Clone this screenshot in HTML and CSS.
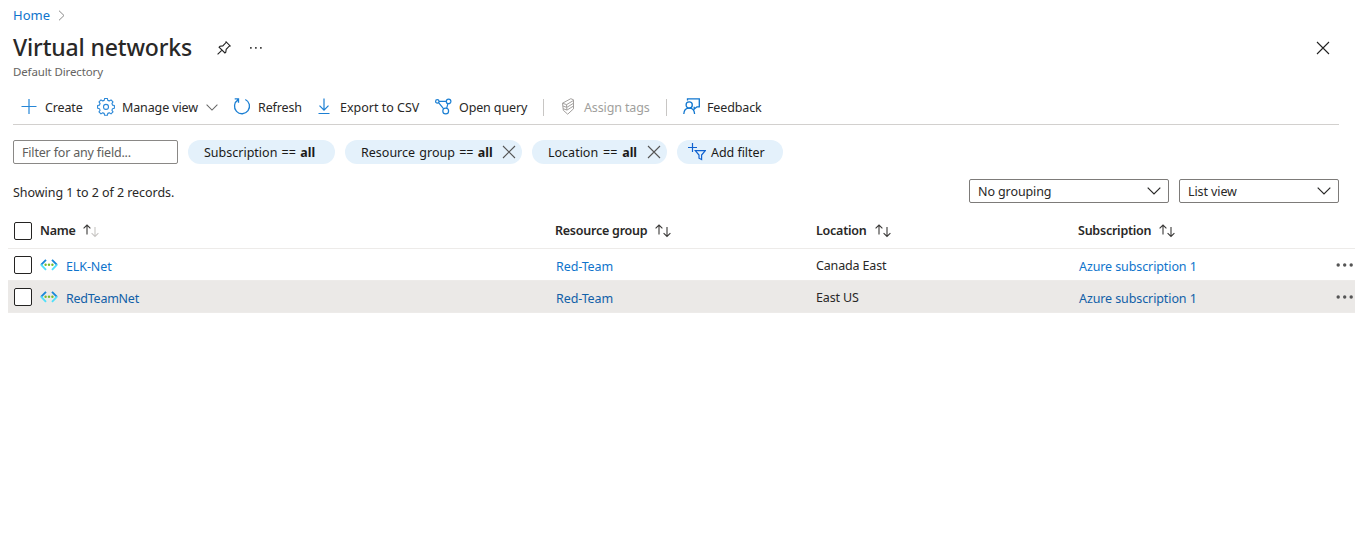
FILE: index.html
```html
<!DOCTYPE html>
<html lang="en">
<head>
<meta charset="utf-8">
<title>Virtual networks</title>
<link rel="stylesheet" href="styles.css">
</head>
<body>
<svg class="defs" width="0" height="0" aria-hidden="true">
  <defs>
    <symbol id="net" viewBox="0 0 18 12">
      <path d="M6 .8 1 5.9M12 .8 17 5.9" stroke="#1988d9" stroke-width="1.9" fill="none"/>
      <path d="M1 5.6 6 10.8M17 5.6 12 10.8" stroke="#50e0fa" stroke-width="1.9" fill="none"/>
      <g fill="#76bc2d"><circle cx="5.6" cy="5.8" r="1.2"/><circle cx="9" cy="5.8" r="1.2"/><circle cx="12.4" cy="5.8" r="1.2"/></g>
    </symbol>
    <symbol id="up" viewBox="0 0 8 12"><path d="M4 10.5V1M.6 4.4 4 1l3.4 3.4" fill="none" stroke="currentColor" stroke-width="1.1"/></symbol>
    <symbol id="down" viewBox="0 0 8 12"><path d="M4 1v9.5M.6 7.1 4 10.5l3.4-3.4" fill="none" stroke="currentColor" stroke-width="1.1"/></symbol>
    <symbol id="x" viewBox="0 0 14 14"><path d="m1 1 12 12M13 1 1 13" fill="none" stroke="currentColor" stroke-width="1.1"/></symbol>
    <symbol id="chev" viewBox="0 0 14 8"><path d="m.7.7 6.3 6.3L13.3.7" fill="none" stroke="currentColor" stroke-width="1.2"/></symbol>
    <symbol id="dots" viewBox="0 0 18 4"><g fill="currentColor"><circle cx="2.2" cy="2" r="1.7"/><circle cx="8.7" cy="2" r="1.7"/><circle cx="15.2" cy="2" r="1.7"/></g></symbol>
  </defs>
</svg>
<main class="page">
  <nav class="crumbs"><a class="link">Home</a><svg width="7" height="11" viewBox="0 0 7 11"><path d="m1 .7 5 4.8-5 4.8" fill="none" stroke="#8a8a8a"/></svg></nav>
  <header class="heading">
    <h1>Virtual networks</h1>
    <svg width="14" height="14" viewBox="0 0 14 14"><path d="M9.1.8 13.2 4.9 12.2 5.2 9.2 8.3 8.8 11.2 7.9 12 2.1 6.2 3 5.3 5.8 4.9 8.8 1.8ZM5 9.1.6 13.4" fill="none" stroke="#222" stroke-width="1.1"/></svg>
    <svg class="more" width="12" height="2" viewBox="0 0 12 2" fill="#444"><path d="M0 0h1.7v1.7H0zM5 0h1.7v1.7H5zM10 0h1.7v1.7H10z"/></svg>
    <svg class="close" width="14" height="14"><use href="#x"/></svg>
  </header>
  <p class="subtitle">Default Directory</p>

  <div class="toolbar">
    <div class="tool"><svg width="16" height="16" viewBox="0 0 16 16"><path d="M8 0v15M.5 7.5h15" stroke="#2586d7" stroke-width="1.2"/></svg><span>Create</span></div>
    <div class="tool tight"><svg width="18" height="18" viewBox="0 0 18 18" fill="none" stroke="#2b88d8" stroke-width="1.1" stroke-linejoin="round"><path d="M7.6.8h2.8l.4 1.900q.900.200 1.500.6l1.700-1.100 2 2-1.100 1.700q.4.700.6 1.500l1.900.4v2.800l-1.900.4q-.2.900-.6 1.500l1.100 1.700-2 2-1.700-1.100q-.7.4-1.500.6l-.4 1.900H7.600l-.4-1.900q-.9-.2-1.500-.6L4 16.200l-2-2 1.100-1.700q-.4-.7-.6-1.500l-1.900-.4V7.800l1.900-.4q.2-.9.6-1.500L2 4.200l2-2 1.700 1.100q.7-.4 1.500-.6Z" transform="translate(0 -.3)"/><circle cx="9" cy="8.900" r="2.500"/></svg><span>Manage view</span><svg class="tool-chev" width="12" height="7"><use href="#chev"/></svg></div>
    <div class="tool tight"><svg width="18" height="18" viewBox="0 0 18 18" fill="none" stroke="#1b7fd3" stroke-width="1.3"><path d="M12.3 1.5A7.5 7.5 0 1 1 5 1.9M1.7.8H5.5V4.7"/></svg><span>Refresh</span></div>
    <div class="tool export"><svg width="16" height="18" viewBox="0 0 16 18" fill="none" stroke="#1b7fd3" stroke-width="1.2"><path d="M8 .5V12M3.5 7.700 8 12.200l4.500-4.500M2.500 15.500h11"/></svg><span>Export to CSV</span></div>
    <div class="tool tight"><svg width="17" height="18" viewBox="0 0 17 18" fill="none" stroke="#1b7fd3" stroke-width="1.2"><circle cx="2.3" cy="3.4" r="1.7"/><circle cx="13.6" cy="3.4" r="2.3"/><circle cx="10.7" cy="13" r="2.9"/><path d="M4 3.4h7.3M3.6 4.6l5.1 6.300M12.900 5.700l-1.200 4.400"/></svg><span>Open query</span></div>
    <i class="sep"></i>
    <div class="tool disabled"><svg width="16" height="18" viewBox="0 0 16 18" fill="none" stroke="#a3a09e" stroke-width="1"><path d="M2.500 5.200 10.800.700l2.700 1.100v9L7.700 16.200 3.300 12.300ZM2.600 5.300 6.600 6.600 13.400 2.500M6.600 6.600v2.600M2.900 8l3.900 1.400 6.600-4.100M6.800 9.400V12M3.100 10.700l3.900 1.400 6.400-4"/></svg><span>Assign tags</span></div>
    <i class="sep"></i>
    <div class="tool tight"><svg width="17" height="18" viewBox="0 0 17 18" fill="none" stroke="#0f76cf" stroke-width="1.3"><path d="M4.5 2.5V.8h11.800v8h-2.300l-2.800 2.300V8.800"/><circle cx="6.200" cy="7" r="3.100"/><path d="M.8 16c.2-3.500 2.400-5.800 5.400-5.800s5.200 2.300 5.400 5.800"/></svg><span>Feedback</span></div>
  </div>

  <div class="filters">
    <div class="search">Filter for any field...</div>
    <div class="pill pill-sub"><span>Subscription == <b>all</b></span></div>
    <div class="pill pill-rg"><span>Resource group == <b>all</b></span><svg width="14" height="14"><use href="#x"/></svg></div>
    <div class="pill pill-loc"><span>Location == <b>all</b></span><svg width="14" height="14"><use href="#x"/></svg></div>
    <div class="pill pill-add"><svg width="18" height="18" viewBox="0 0 18 18" fill="none" stroke="#0f62d0" stroke-width="1.2"><path d="M4.500 0v9M0 4.500h9M7.300 7.600h10L13.600 12v4.500l-2.600-1.300V12Z"/></svg><span>Add filter</span></div>
  </div>

  <div class="summary">
    <p>Showing 1 to 2 of 2 records.</p>
    <div class="select grouping"><span>No grouping</span><svg width="14" height="8"><use href="#chev"/></svg></div>
    <div class="select view"><span>List view</span><svg width="14" height="8"><use href="#chev"/></svg></div>
  </div>

  <section class="table">
    <div class="row head">
      <i class="check"></i>
      <div class="cell"><span>Name</span><span class="sort faded"><svg width="8" height="12"><use href="#up"/></svg><svg width="8" height="12"><use href="#down"/></svg></span></div>
      <div class="cell"><span>Resource group</span><span class="sort"><svg width="8" height="12"><use href="#up"/></svg><svg width="8" height="12"><use href="#down"/></svg></span></div>
      <div class="cell"><span>Location</span><span class="sort"><svg width="8" height="12"><use href="#up"/></svg><svg width="8" height="12"><use href="#down"/></svg></span></div>
      <div class="cell"><span>Subscription</span><span class="sort"><svg width="8" height="12"><use href="#up"/></svg><svg width="8" height="12"><use href="#down"/></svg></span></div>
    </div>
    <div class="row">
      <i class="check"></i>
      <div class="cell name"><svg width="18" height="12"><use href="#net"/></svg><a class="link">ELK-Net</a></div>
      <div class="cell linked"><a class="link">Red-Team</a></div>
      <div class="cell plain"><span>Canada East</span></div>
      <div class="cell linked"><a class="link">Azure subscription 1</a></div>
      <svg class="rowmore" width="18" height="4"><use href="#dots"/></svg>
    </div>
    <div class="row hovered">
      <i class="check"></i>
      <div class="cell name"><svg width="18" height="12"><use href="#net"/></svg><a class="link tighter">RedTeamNet</a></div>
      <div class="cell linked"><a class="link">Red-Team</a></div>
      <div class="cell plain"><span>East US</span></div>
      <div class="cell linked"><a class="link">Azure subscription 1</a></div>
      <svg class="rowmore" width="18" height="4"><use href="#dots"/></svg>
    </div>
  </section>
</main>
</body>
</html>
```
FILE: styles.css
```css
* { box-sizing: border-box; }
body { margin: 0; background: #fff; color: #292827; font: 12.5px/18px "Noto Sans", "Open Sans", sans-serif; letter-spacing: -0.1px; overflow: hidden; }
.defs { display: block; height: 0; }
.page { width: 1355px; height: 545px; }
p, h1 { margin: 0; }
svg { display: block; flex: none; }
span, a, h1 { white-space: nowrap; }
.link { color: #0f74cc; }

.crumbs { display: flex; align-items: center; height: 30px; padding-left: 13px; font-size: 13px; letter-spacing: 0; }
.crumbs .link { width: 45px; }
.heading { display: flex; align-items: center; height: 35px; padding: 0 25px 0 13px; }
h1 { width: 204px; padding-bottom: 2px; font-size: 23px; line-height: 34px; font-weight: 500; letter-spacing: -0.15px; }
.more { margin-left: 19px; }
.close { margin-left: auto; color: #222; }
.subtitle { height: 25px; padding: 0 13px; line-height: 14px; font-size: 11.5px; letter-spacing: -0.13px; color: #666462; }

.toolbar { display: grid; grid-template-columns: 76px 136px 83px 119px 108px 17px 106px 17px auto; align-items: center; height: 35px; margin: 0 16px 0 13px; padding-left: 8px; border-bottom: 1px solid #d2d0ce; }
.tool { display: flex; align-items: center; gap: 8px; letter-spacing: -0.13px; }
.tool.tight { gap: 7px; }
.tool.export { letter-spacing: 0; }
.tool span { padding-top: 1px; }
.tool-chev { color: #666; margin-left: 1px; }
.sep { width: 1px; height: 17px; background: #c8c6c4; }
.disabled { color: #a19f9d; }

.filters { display: flex; gap: 10px; height: 39px; padding: 15px 13px 0; }
.search { width: 165px; height: 24px; padding: 3px 8px 0; border: 1px solid #8a8886; border-radius: 2px; color: #605e5c; letter-spacing: -0.18px; }
.pill { display: flex; align-items: center; height: 24px; border-radius: 12px; background: #e4f1fb; color: #1b1a19; padding-left: 16px; letter-spacing: 0; word-spacing: 1px; }
.pill span { padding-top: 2px; }
.pill > svg { color: #555; }
.pill-sub { width: 147px; }
.pill-rg { width: 177px; justify-content: space-between; padding-right: 6px; }
.pill-loc { width: 135px; justify-content: space-between; padding-right: 6px; word-spacing: 1.6px; }
.pill-add { width: 106px; padding-left: 11px; gap: 5px; word-spacing: 0; letter-spacing: -0.05px; }

.summary { display: flex; align-items: center; gap: 10px; height: 24px; margin: 15px 16px 0 13px; }
.summary p { margin-right: auto; padding-top: 3px; letter-spacing: -0.05px; }
.select { display: flex; align-items: center; justify-content: space-between; height: 24px; padding: 0 7px 0 8px; border: 1px solid #7d7b79; border-radius: 2px; }
.select span { padding-top: 2px; }
.grouping { width: 200px; }
.view { width: 160px; }

.table { margin: 10px 0 0 8px; }
.row { display: grid; grid-template-columns: 32px 515px 261px 262px 1fr auto; align-items: center; height: 32px; border-bottom: 1px solid #edebe9; }
.row .check { width: 18px; height: 18px; margin-left: 6px; border: 1px solid #242322; border-radius: 2px; background: #fff; }
.head { height: 36px; font-weight: 600; letter-spacing: -0.24px; }
.cell { display: flex; align-items: center; }
.plain { padding-top: 2px; letter-spacing: -0.15px; }
.name { gap: 8px; }
.name .link, .linked { padding-top: 4px; }
.name .link { margin-bottom: -1px; }
.name .tighter { letter-spacing: -0.25px; }
.linked { padding-left: 1px; }
.sort { display: flex; margin-left: 8px; color: #3b3a39; }
.sort svg + svg { margin-top: 2px; }
.faded { margin-left: 7px; }
.faded svg + svg { color: #c8c6c4; }
.hovered { background: #ebe9e7; }
.hovered .link { color: #1160a8; }
.rowmore { color: #555; margin-right: 1px; }
```
